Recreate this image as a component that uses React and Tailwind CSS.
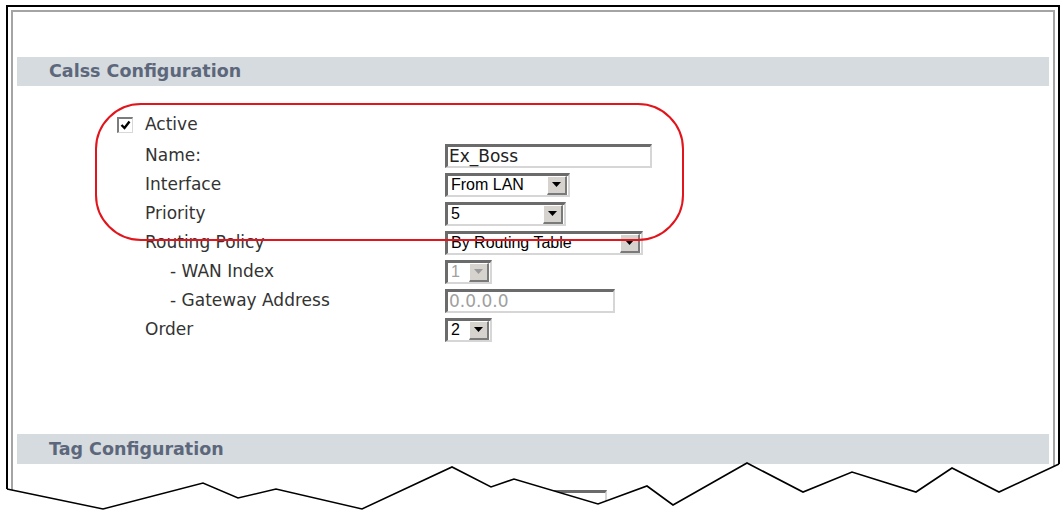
import React from "react";

const label = "font-['DejaVu_Sans',sans-serif] text-[17px] text-[#333]";
const inset =
  "border-t-[3px] border-l-[3px] border-t-[#6b6b6b] border-l-[#6b6b6b] border-r-2 border-b-2 border-r-[#d6d6d6] border-b-[#d6d6d6] bg-white";

function Arrow({ disabled }) {
  return (
    <div className="w-[20px] h-[19px] mr-[1px] flex items-center justify-center bg-[#d6d3ce] border-t border-l border-t-white border-l-white border-r-2 border-b-2 border-r-[#7a7a7a] border-b-[#7a7a7a]">
      <svg width="9" height="5" viewBox="0 0 9 5">
        <polygon points="0,0 9,0 4.5,5" fill={disabled ? "#9a9a9a" : "#000"} />
      </svg>
    </div>
  );
}

function Select({ value, width, disabled }) {
  return (
    <div className={`flex items-center h-[24px] ${width} ${inset}`}>
      <span
        className={`flex-1 pl-[3px] font-['Liberation_Sans',sans-serif] text-[16px] leading-none ${
          disabled ? "text-[#a0a0a0]" : "text-black"
        }`}
      >
        {value}
      </span>
      <Arrow disabled={disabled} />
    </div>
  );
}

function TextBox({ value, width, disabled }) {
  return (
    <div className={`flex items-center h-[24px] ${width} ${inset}`}>
      <span
        className={`pl-[1px] font-['DejaVu_Sans',sans-serif] text-[17px] leading-none ${
          disabled ? "text-[#a0a0a0]" : "text-[#222]"
        }`}
      >
        {value}
      </span>
    </div>
  );
}

function Row({ name, indent, children }) {
  return (
    <div className="flex items-center h-[29px] pl-[128px]">
      <div className={`w-[300px] ${label} ${indent ? "pl-[25px]" : ""}`}>{name}</div>
      {children}
    </div>
  );
}

function SectionBar({ title, height }) {
  return (
    <div className={`flex items-center ${height} pl-[32px] bg-[#d5dbdf]`}>
      <span className="font-['DejaVu_Sans',sans-serif] font-bold text-[17.5px] text-[#5d677b]">
        {title}
      </span>
    </div>
  );
}

const zig = [
  [7, 489], [103, 509], [203, 483], [238, 498], [276, 489], [362, 509],
  [452, 467], [491, 487], [514, 479], [598, 504], [647, 486], [673, 505],
  [747, 463], [803, 492], [852, 472], [916, 492], [952, 468], [999, 492],
  [1059, 464],
];

export default function App() {
  const line = zig.map((p) => p.join(",")).join(" ");
  const fill = `0,489 ${line} 1064,464 1064,514 0,514`;

  return (
    <div className="relative w-[1064px] h-[514px] overflow-hidden bg-white pt-[5px] pl-[6px]">
      <div className="w-[1054px] h-[540px] border-2 border-black p-[3px]">
        <div className="h-full border-2 border-[#a4a4a4] px-[4px] pt-[45px]">
          <SectionBar title="Calss Configuration" height="h-[29px]" />

          <div className="mt-[24px]">
            <div className="flex items-center h-[29px] pl-[100px] mb-[2px]">
              <div className="w-[16px] h-[16px] flex items-center justify-center bg-white border-t-2 border-l-2 border-t-[#7c7c7c] border-l-[#7c7c7c] border-r border-b border-r-[#d8d8d8] border-b-[#d8d8d8]">
                <svg width="11" height="10" viewBox="0 0 11 10">
                  <polyline points="1.5,5 4.5,8 9.5,1.5" fill="none" stroke="#000" strokeWidth="2.4" />
                </svg>
              </div>
              <span className={`ml-[12px] ${label}`}>Active</span>
            </div>

            <Row name="Name:">
              <TextBox value="Ex_Boss" width="w-[207px]" />
            </Row>
            <Row name="Interface">
              <Select value="From LAN" width="w-[125px]" />
            </Row>
            <Row name="Priority">
              <Select value="5" width="w-[121px]" />
            </Row>
            <Row name="Routing Policy">
              <Select value="By Routing Table" width="w-[198px]" />
            </Row>
            <Row name="- WAN Index" indent>
              <Select value="1" width="w-[47px]" disabled />
            </Row>
            <Row name="- Gateway Address" indent>
              <TextBox value="0.0.0.0" width="w-[170px]" disabled />
            </Row>
            <Row name="Order">
              <Select value="2" width="w-[47px]" />
            </Row>
          </div>

          <div className="mt-[90px]">
            <SectionBar title="Tag Configuration" height="h-[30px]" />
          </div>

          <div className="mt-[23px]">
            <Row name="">
              <TextBox value="" width="w-[162px]" />
            </Row>
          </div>
        </div>
      </div>

      {/* highlight round the first rows */}
      <div className="pointer-events-none absolute left-[95px] top-[103px] w-[589px] h-[138px] rounded-[46px] border-2 border-[#e2141c]" />

      {/* torn edge */}
      <svg className="pointer-events-none absolute left-0 top-0" width="1064" height="514">
        <polygon points={fill} fill="#fff" />
        <polyline points={line} fill="none" stroke="#000" strokeWidth="1.6" strokeLinejoin="miter" />
      </svg>
    </div>
  );
}
